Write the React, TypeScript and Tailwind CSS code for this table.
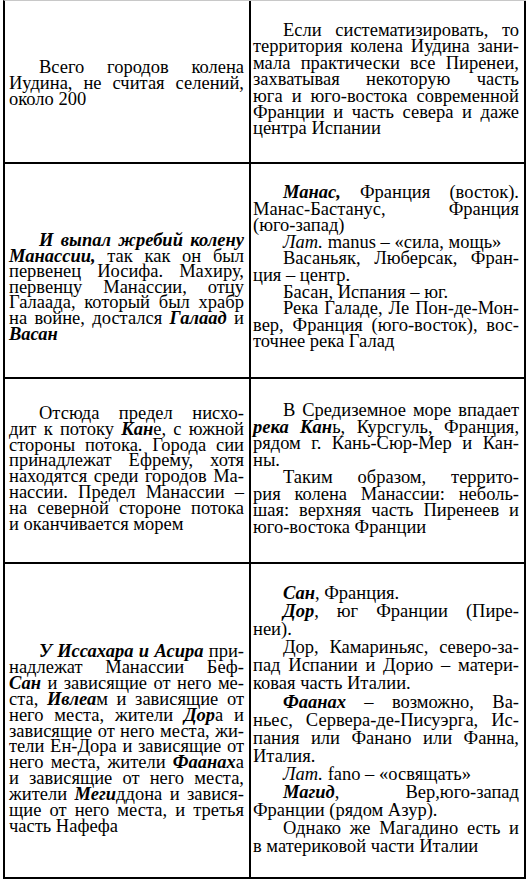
import React from "react";

type Seg = string | { b: string } | { i: string };

function render(segs: Seg[]) {
  return segs.map((s, k) => {
    if (typeof s === "string") return <React.Fragment key={k}>{s}</React.Fragment>;
    if ("b" in s)
      return (
        <b key={k} className="font-bold italic">
          {s.b}
        </b>
      );
    return (
      <i key={k} className="italic">
        {s.i}
      </i>
    );
  });
}

// A paragraph: list of lines; first line indented; all but the last justified.
function Para({ lines }: { lines: Seg[][] }) {
  return (
    <div>
      {lines.map((ln, idx) => {
        const first = idx === 0;
        const last = idx === lines.length - 1;
        let cls = "text-nowrap text-left";
        if (first && !last) cls = "text-nowrap text-justify [text-align-last:justify] indent-[30px]";
        else if (first && last) cls = "text-nowrap text-left indent-[30px]";
        else if (!last) cls = "text-nowrap text-justify [text-align-last:justify]";
        return (
          <div key={idx} className={cls}>
            {render(ln)}
          </div>
        );
      })}
    </div>
  );
}

export default function App() {
  return (
    <div className="w-[530px] h-[881px] bg-white text-black font-['Liberation_Serif','Times_New_Roman',serif] text-[18.5px] overflow-hidden">
      <div className="ml-[3px] w-[523px] grid grid-cols-[246px_275px] border-l-2 border-l-black border-t border-t-[#c8c8c8]">
        {/* Row 1 */}
        <div className="h-[163px] border-r-2 border-b-2 border-black pl-[4px] pr-[5px] pt-[59px] leading-[15.8px]">
          <Para lines={[["Всего городов колена"], ["Иудина, не считая селений,"], ["около 200"]]} />
        </div>
        <div className="h-[163px] border-r-2 border-b-2 border-black pl-[2px] pr-[5px] pt-[21px] leading-[16.4px]">
          <Para
            lines={[
              ["Если систематизировать, то"],
              ["территория колена Иудина зани-"],
              ["мала практически все Пиренеи,"],
              ["захватывая некоторую часть"],
              ["юга и юго-востока современной"],
              ["Франции и часть севера и даже"],
              ["центра Испании"],
            ]}
          />
        </div>

        {/* Row 2 */}
        <div className="h-[215px] border-r-2 border-b-2 border-black pl-[4px] pr-[5px] pt-[69px] leading-[15.6px]">
          <Para
            lines={[
              [{ b: "И выпал жребий колену" }],
              [{ b: "Манассии," }, " так как он был"],
              ["первенец Иосифа. Махиру,"],
              ["первенцу Манассии, отцу"],
              ["Галаада, который был храбр"],
              ["на войне, достался ", { b: "Галаад" }, " и"],
              [{ b: "Васан" }],
            ]}
          />
        </div>
        <div className="h-[215px] border-r-2 border-b-2 border-black pl-[2px] pr-[5px] pt-[20px] leading-[16.6px]">
          <Para
            lines={[
              [{ b: "Манас," }, " Франция (восток)."],
              ["Манас-Бастанус, Франция"],
              ["(юго-запад)"],
            ]}
          />
          <Para lines={[[{ i: "Лат." }, " manus – «сила, мощь»"]]} />
          <Para lines={[["Васаньяк, Люберсак, Фран-"], ["ция – центр."]]} />
          <Para lines={[["Басан, Испания – юг."]]} />
          <Para
            lines={[
              ["Река Галаде, Ле Пон-де-Мон-"],
              ["вер, Франция (юго-восток), вос-"],
              ["точнее река Галад"],
            ]}
          />
        </div>

        {/* Row 3 */}
        <div className="h-[185px] border-r-2 border-b-2 border-black pl-[4px] pr-[5px] pt-[27px] leading-[15.8px]">
          <Para
            lines={[
              ["Отсюда предел нисхо-"],
              ["дит к потоку ", { b: "Кан" }, "е, с южной"],
              ["стороны потока. Города сии"],
              ["принадлежат Ефрему, хотя"],
              ["находятся среди городов Ма-"],
              ["нассии. Предел Манассии –"],
              ["на северной стороне потока"],
              ["и оканчивается морем"],
            ]}
          />
        </div>
        <div className="h-[185px] border-r-2 border-b-2 border-black pl-[2px] pr-[5px] pt-[23px] leading-[16.7px]">
          <Para
            lines={[
              ["В Средиземное море впадает"],
              [{ b: "река Кан" }, "ь, Курсгуль, Франция,"],
              ["рядом г. Кань-Сюр-Мер и Кан-"],
              ["ны."],
            ]}
          />
          <Para
            lines={[
              ["Таким образом, террито-"],
              ["рия колена Манассии: неболь-"],
              ["шая: верхняя часть Пиренеев и"],
              ["юго-востока Франции"],
            ]}
          />
        </div>

        {/* Row 4 */}
        <div className="h-[315px] border-r-2 border-b-2 border-black pl-[4px] pr-[5px] pt-[80px] leading-[15.9px]">
          <Para
            lines={[
              [{ b: "У Иссахара и Асира" }, " при-"],
              ["надлежат Манассии Беф-"],
              [{ b: "Сан" }, " и зависящие от него ме-"],
              ["ста, ", { b: "Ивлеа" }, "м и зависящие от"],
              ["него места, жители ", { b: "Дор" }, "а и"],
              ["зависящие от него места, жи-"],
              ["тели Ен-Дора и зависящие от"],
              ["него места, жители ", { b: "Фаанах" }, "а"],
              ["и зависящие от него места,"],
              ["жители ", { b: "Меги" }, "ддона и завися-"],
              ["щие от него места, и третья"],
              ["часть Нафефа"],
            ]}
          />
        </div>
        <div className="h-[315px] border-r-2 border-b-2 border-black pl-[2px] pr-[5px] pt-[20px] leading-[18.1px]">
          <Para lines={[[{ b: "Сан" }, ", Франция."]]} />
          <Para lines={[[{ b: "Дор" }, ", юг Франции (Пире-"], ["неи)."]]} />
          <Para
            lines={[
              ["Дор, Камариньяс, северо-за-"],
              ["пад Испании и Дорио – матери-"],
              ["ковая часть Италии."],
            ]}
          />
          <Para
            lines={[
              [{ b: "Фаанах" }, " – возможно, Ва-"],
              ["ньес, Сервера-де-Писуэрга, Ис-"],
              ["пания или Фанано или Фанна,"],
              ["Италия."],
            ]}
          />
          <Para lines={[[{ i: "Лат." }, " fano – «освящать»"]]} />
          <Para lines={[[{ b: "Магид" }, ", Вер,юго-запад"], ["Франции (рядом Азур)."]]} />
          <Para lines={[["Однако же Магадино есть и"], ["в материковой части Италии"]]} />
        </div>
      </div>
    </div>
  );
}
